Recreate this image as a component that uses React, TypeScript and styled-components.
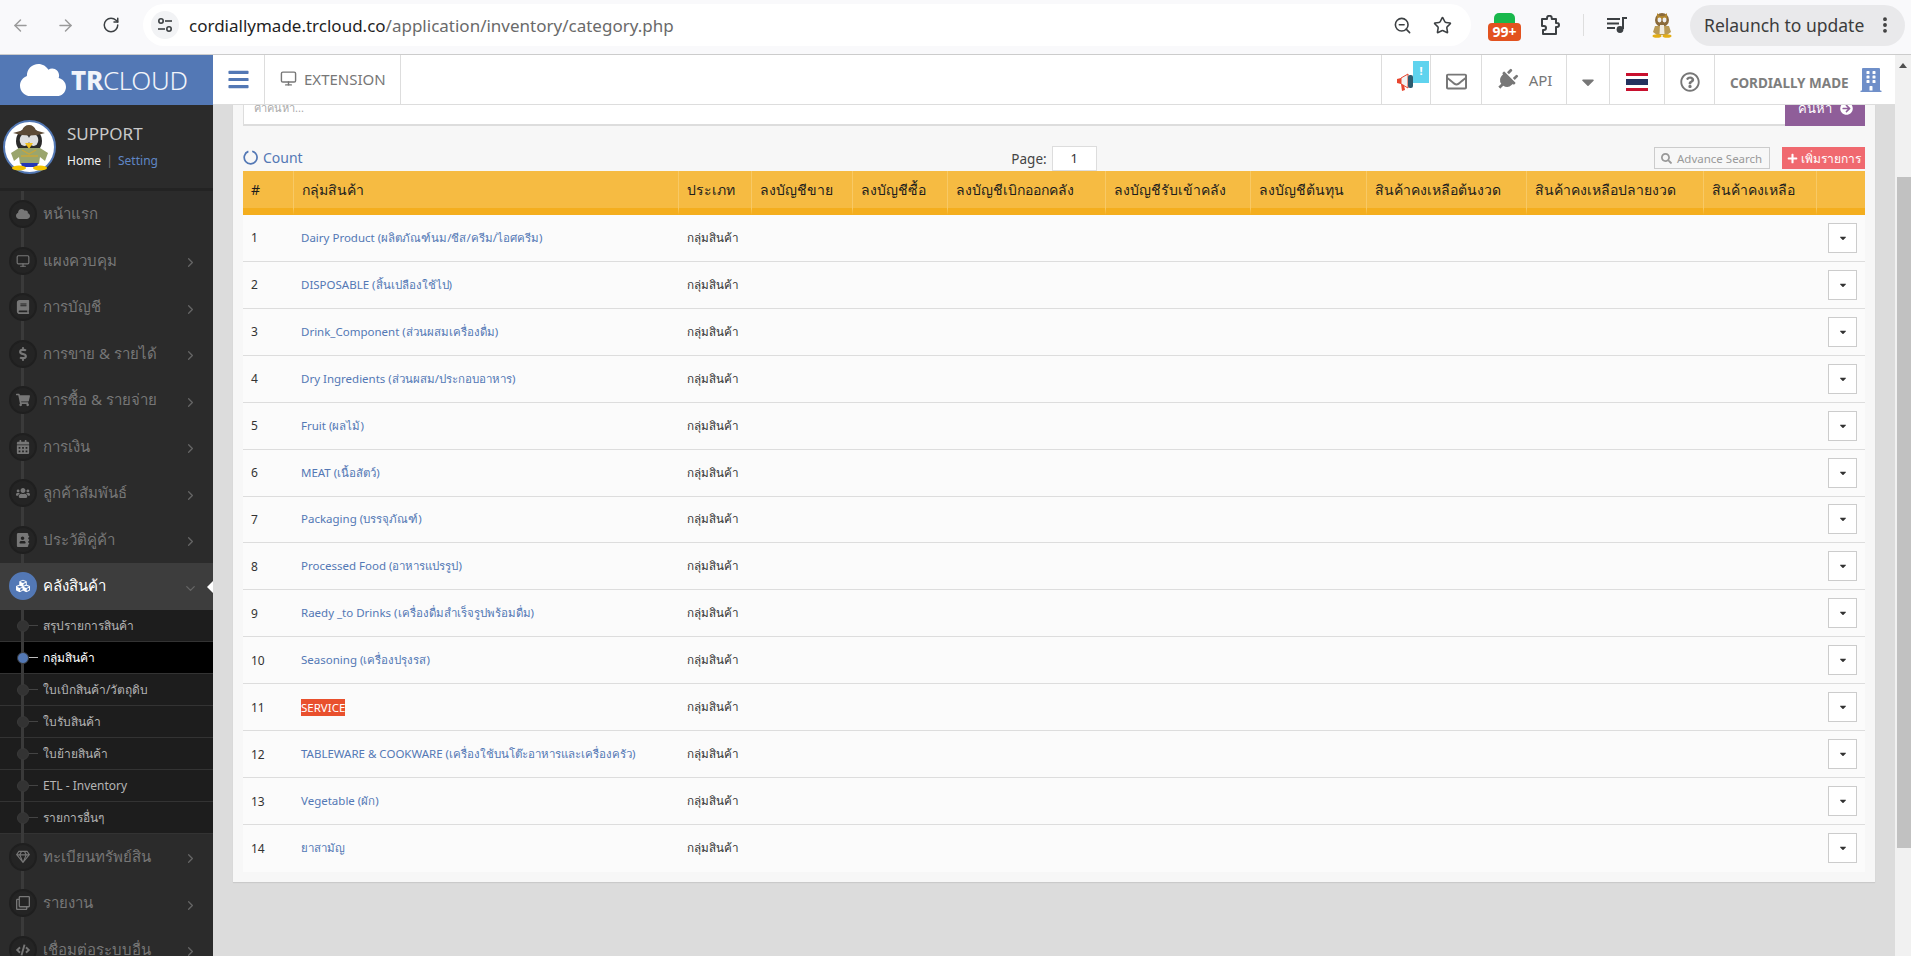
import * as React from 'react';
import styled, { createGlobalStyle } from 'styled-components';
import { ArrowLeft, ArrowRight, RotateCw, ZoomOut, Star, MoreVertical } from 'lucide-react';
import {
    FaCloud, FaBook, FaDollarSign, FaShoppingCart, FaCalendarAlt, FaUsers, FaAddressBook, FaCubes,
    FaRegGem, FaRegClone, FaCode, FaBars, FaRegEnvelope, FaPlug, FaCaretDown, FaRegQuestionCircle,
    FaBuilding, FaSearch, FaPlus, FaArrowCircleRight,
} from 'react-icons/fa';
import { FiMonitor, FiChevronRight, FiChevronDown } from 'react-icons/fi';

const FONT = `"Noto Sans", "Noto Sans CJK SC", sans-serif`;

const GlobalStyle = createGlobalStyle`
    html, body {
        margin: 0;
        padding: 0;
        height: 100%;
        overflow: hidden;
        font-family: ${FONT};
    }
    * { box-sizing: border-box; }
`;

const menuTop = [
    { label: 'หน้าแรก', icon: <FaCloud />, more: false },
    { label: 'แผงควบคุม', icon: <FiMonitor />, more: true },
    { label: 'การบัญชี', icon: <FaBook />, more: true },
    { label: 'การขาย & รายได้', icon: <FaDollarSign />, more: true },
    { label: 'การซื้อ & รายจ่าย', icon: <FaShoppingCart />, more: true },
    { label: 'การเงิน', icon: <FaCalendarAlt />, more: true },
    { label: 'ลูกค้าสัมพันธ์', icon: <FaUsers />, more: true },
    { label: 'ประวัติคู่ค้า', icon: <FaAddressBook />, more: true },
];

const subMenu = ['สรุปรายการสินค้า', 'กลุ่มสินค้า', 'ใบเบิกสินค้า/วัตถุดิบ', 'ใบรับสินค้า', 'ใบย้ายสินค้า', 'ETL - Inventory', 'รายการอื่นๆ'];

const menuBottom = [
    { label: 'ทะเบียนทรัพย์สิน', icon: <FaRegGem /> },
    { label: 'รายงาน', icon: <FaRegClone /> },
    { label: 'เชื่อมต่อระบบอื่น', icon: <FaCode /> },
];

const columns = [
    { label: '#', width: 50 },
    { label: 'กลุ่มสินค้า', width: 385 },
    { label: 'ประเภท', width: 73 },
    { label: 'ลงบัญชีขาย', width: 101 },
    { label: 'ลงบัญชีซื้อ', width: 95 },
    { label: 'ลงบัญชีเบิกออกคลัง', width: 158 },
    { label: 'ลงบัญชีรับเข้าคลัง', width: 145 },
    { label: 'ลงบัญชีต้นทุน', width: 116 },
    { label: 'สินค้าคงเหลือต้นงวด', width: 160 },
    { label: 'สินค้าคงเหลือปลายงวด', width: 177 },
    { label: 'สินค้าคงเหลือ', width: 113 },
    { label: '', width: 49 },
];

const categories = [
    'Dairy Product (ผลิตภัณฑ์นม/ชีส/ครีม/ไอศครีม)',
    'DISPOSABLE (สิ้นเปลืองใช้ไป)',
    'Drink_Component (ส่วนผสมเครื่องดื่ม)',
    'Dry Ingredients (ส่วนผสม/ประกอบอาหาร)',
    'Fruit (ผลไม้)',
    'MEAT (เนื้อสัตว์)',
    'Packaging (บรรจุภัณฑ์)',
    'Processed Food (อาหารแปรรูป)',
    'Raedy _to Drinks (เครื่องดื่มสำเร็จรูปพร้อมดื่ม)',
    'Seasoning (เครื่องปรุงรส)',
    'SERVICE',
    'TABLEWARE & COOKWARE (เครื่องใช้บนโต๊ะอาหารและเครื่องครัว)',
    'Vegetable (ผัก)',
    'ยาสามัญ',
];

const Penguin = () => (
    <svg width="53" height="54" viewBox="0 0 53 54">
        <ellipse cx="26.5" cy="27" rx="25.5" ry="26" fill="#fff" stroke="#5378b5" strokeWidth="2" />
        <ellipse cx="26" cy="21" rx="13" ry="13" fill="#2a2a2a" />
        <ellipse cx="21.5" cy="20" rx="4.8" ry="6" fill="#dedede" />
        <ellipse cx="30.5" cy="20" rx="4.8" ry="6" fill="#dedede" />
        <path d="M10 13 L19 10.5 Q21 5 26 5 Q31 5 33 10.5 L42 13 Q27 18 10 13Z" fill="#5c4a36" />
        <path d="M22 23 L30 23 L26 29Z" fill="#f0c020" />
        <path d="M8 33 L16 28 L37 28 L45 33 L42 41 L37 37 L36 44 L17 44 L16 37 L11 41Z" fill="#9aa56d" />
        <path d="M19 30 L26 34 L33 30 M18 36 L35 36" fill="none" stroke="#c9a63a" strokeWidth="1.3" />
        <path d="M18 43 L35 43 L34 47 L19 47Z" fill="#2438b8" />
        <ellipse cx="16" cy="48" rx="7" ry="2.6" fill="#f5c400" />
        <ellipse cx="37" cy="48" rx="7" ry="2.6" fill="#f5c400" />
    </svg>
);

const ProfileGlyph = () => (
    <svg width="22" height="26" viewBox="0 0 22 26">
        <ellipse cx="11" cy="8" rx="7" ry="7" fill="#8a6a3a" />
        <path d="M6 1 L9 4 L13 4 L16 1 L16 7 L6 7Z" fill="#b2862f" />
        <ellipse cx="8.5" cy="8" rx="2" ry="2.4" fill="#eee" />
        <ellipse cx="13.5" cy="8" rx="2" ry="2.4" fill="#eee" />
        <path d="M4 14 L18 14 L20 20 L16 23 L6 23 L2 20Z" fill="#b99a55" />
        <path d="M9 13 L13 13 L13.5 22 L8.5 22Z" fill="#efeadf" />
        <ellipse cx="6" cy="24" rx="4.5" ry="1.8" fill="#e3ae16" />
        <ellipse cx="16" cy="24" rx="4.5" ry="1.8" fill="#e3ae16" />
    </svg>
);

const TuneGlyph = () => (
    <svg width="16" height="16" viewBox="0 0 16 16" fill="none" stroke="#3c4043" strokeWidth="1.6">
        <circle cx="4" cy="4" r="2.2" />
        <path d="M8 4h7" />
        <circle cx="12" cy="12" r="2.2" />
        <path d="M1 12h7" />
    </svg>
);

const PuzzleGlyph = () => (
    <svg width="21" height="20" viewBox="0 0 21 20" fill="none" stroke="#3c4043" strokeWidth="2" strokeLinejoin="round">
        <path d="M2 4 H7 V3.2 a2.4 2.4 0 0 1 4.8 0 V4 H16 V8 h1 a2 2 0 0 1 0 4 h-1 V19 H3 V15 h1 a2 2 0 0 0 0 -4 H2 Z" />
    </svg>
);

const MediaGlyph = () => (
    <svg width="20" height="16" viewBox="0 0 20 16" fill="#3c4043">
        <rect x="0" y="1" width="13" height="2" />
        <rect x="0" y="5.5" width="12" height="2" />
        <rect x="0" y="10" width="8" height="2" />
        <rect x="15" y="0" width="2" height="12" />
        <rect x="15" y="0" width="5" height="2" />
        <circle cx="13" cy="12.5" r="3.4" />
    </svg>
);

const Megaphone = () => (
    <svg width="18" height="20" viewBox="0 0 18 20">
        <path d="M0 7 L4 6 L4 12 L0 11Z" fill="#e8462f" />
        <path d="M4 6 L11 2 L11 16 L4 12Z" fill="#f2f2f2" stroke="#e8462f" strokeWidth="1" />
        <path d="M4 12 L7 13 L8 18 L5 19Z" fill="#e8462f" />
        <rect x="11" y="3" width="5" height="13" rx="2" fill="#2d5a6e" />
    </svg>
);

const ThaiFlag = () => (
    <svg width="22" height="18" viewBox="0 0 22 18">
        <rect width="22" height="18" fill="#fff" />
        <rect width="22" height="3" fill="#c8102e" />
        <rect y="6" width="22" height="6" fill="#24315e" />
        <rect y="15" width="22" height="3" fill="#c8102e" />
    </svg>
);

const Spinner = () => (
    <svg width="15" height="15" viewBox="0 0 15 15" fill="none" stroke="#5378b5" strokeWidth="1.7">
        <path d="M9.2 1.2 A6.4 6.4 0 1 1 5.4 1.4" />
    </svg>
);

export default function App() {
    return (
        <Page>
            <GlobalStyle />
            <BrowserBar>
                <ChromeButton $dim><ArrowLeft size={19} strokeWidth={1.8} /></ChromeButton>
                <ChromeButton $dim><ArrowRight size={19} strokeWidth={1.8} /></ChromeButton>
                <ChromeButton><RotateCw size={18} strokeWidth={2} /></ChromeButton>
                <AddressPill>
                    <TuneCircle><TuneGlyph /></TuneCircle>
                    <Url>cordiallymade.trcloud.co<UrlPath>/application/inventory/category.php</UrlPath></Url>
                    <AddressIcon><ZoomOut size={19} strokeWidth={2} /></AddressIcon>
                    <AddressIcon><Star size={19} strokeWidth={2} /></AddressIcon>
                </AddressPill>
                <ExtensionIcon>
                    <GreenTop />
                    <RedBadge>99+</RedBadge>
                </ExtensionIcon>
                <ToolIcon $width={40}><PuzzleGlyph /></ToolIcon>
                <ToolDivider />
                <ToolIcon $width={46}><MediaGlyph /></ToolIcon>
                <ToolIcon $width={44}><ProfileGlyph /></ToolIcon>
                <RelaunchPill>
                    Relaunch to update
                    <MoreVertical size={20} strokeWidth={2.6} />
                </RelaunchPill>
            </BrowserBar>
            <Body>
                <Sidebar>
                    <LogoBlock>
                        <FaCloud size={46} color="#fff" />
                        <LogoText><b>TR</b>CLOUD</LogoText>
                    </LogoBlock>
                    <Profile>
                        <Penguin />
                        <ProfileInfo>
                            <ProfileName>SUPPORT</ProfileName>
                            <ProfileLinks>Home <Pipe>|</Pipe> <SettingLink>Setting</SettingLink></ProfileLinks>
                        </ProfileInfo>
                    </Profile>
                    <Nav>
                        {menuTop.map((m) => (
                            <MenuItem key={m.label}>
                                <IconCircle>{m.icon}</IconCircle>
                                <MenuLabel>{m.label}</MenuLabel>
                                {m.more && <Chevron><FiChevronRight /></Chevron>}
                            </MenuItem>
                        ))}
                        <MenuItem $active>
                            <IconCircle $active><FaCubes /></IconCircle>
                            <MenuLabel $active>คลังสินค้า</MenuLabel>
                            <Chevron><FiChevronDown /></Chevron>
                        </MenuItem>
                        <SubList>
                            {subMenu.map((s) => (
                                <SubItem key={s} $active={s === 'กลุ่มสินค้า'}>
                                    <SubDot $active={s === 'กลุ่มสินค้า'} />
                                    <SubTick $active={s === 'กลุ่มสินค้า'} />
                                    {s}
                                </SubItem>
                            ))}
                        </SubList>
                        {menuBottom.map((m) => (
                            <MenuItem key={m.label}>
                                <IconCircle>{m.icon}</IconCircle>
                                <MenuLabel>{m.label}</MenuLabel>
                                <Chevron><FiChevronRight /></Chevron>
                            </MenuItem>
                        ))}
                    </Nav>
                </Sidebar>
                <Main>
                    <TopBar>
                        <BarsCell><FaBars size={23} color="#5378b5" /></BarsCell>
                        <ExtensionCell><FiMonitor size={17} />EXTENSION</ExtensionCell>
                        <TopSpacer />
                        <TopCell $width={49}>
                            <Megaphone />
                            <NoticeBadge>!</NoticeBadge>
                        </TopCell>
                        <TopCell $width={51}><FaRegEnvelope size={21} /></TopCell>
                        <TopCell $width={85}><PlugIcon size={22} /><ApiText>API</ApiText></TopCell>
                        <TopCell $width={43}><FaCaretDown size={20} /></TopCell>
                        <TopCell $width={55}><ThaiFlag /></TopCell>
                        <TopCell $width={50}><FaRegQuestionCircle size={20} /></TopCell>
                        <CompanyCell>CORDIALLY MADE<BuildingIcon size={24} color="#6f8fc9" /></CompanyCell>
                    </TopBar>
                    <Content>
                        <Panel>
                            <SearchRow>
                                <SearchInput>คำค้นหา...</SearchInput>
                                <SearchButton>ค้นหา <FaArrowCircleRight size={13} /></SearchButton>
                            </SearchRow>
                            <ToolRow>
                                <CountLink><Spinner />Count</CountLink>
                                <PageBox>Page:<PageInput>1</PageInput></PageBox>
                                <ToolActions>
                                    <AdvanceButton><FaSearch size={11} />Advance Search</AdvanceButton>
                                    <AddButton><FaPlus size={11} />เพิ่มรายการ</AddButton>
                                </ToolActions>
                            </ToolRow>
                            <Table>
                                <colgroup>
                                    {columns.map((c, i) => <col key={i} width={c.width} />)}
                                </colgroup>
                                <thead>
                                    <tr>
                                        {columns.map((c, i) => <Th key={i}>{c.label}</Th>)}
                                    </tr>
                                </thead>
                                <tbody>
                                    {categories.map((name, i) => (
                                        <Row key={name}>
                                            <NumCell>{i + 1}</NumCell>
                                            <NameCell>
                                                {name === 'SERVICE' ? <Highlight>{name}</Highlight> : name}
                                            </NameCell>
                                            <TypeCell>กลุ่มสินค้า</TypeCell>
                                            <td colSpan={8} />
                                            <ActionCell><RowButton><FaCaretDown size={10} /></RowButton></ActionCell>
                                        </Row>
                                    ))}
                                </tbody>
                            </Table>
                        </Panel>
                    </Content>
                </Main>
                <ScrollTrack>
                    <ScrollArrow />
                    <ScrollThumb />
                </ScrollTrack>
            </Body>
        </Page>
    );
}

const Page = styled.div`
    display: flex;
    flex-direction: column;
    height: 100vh;
    overflow: hidden;
`;

const BrowserBar = styled.div`
    display: flex;
    align-items: center;
    height: 55px;
    padding: 0 6px 4px 0;
    flex-shrink: 0;
    background: #f9f9fb;
    border-bottom: 1px solid #ccc;
`;

const ChromeButton = styled.div<{ $dim?: boolean }>`
    display: flex;
    justify-content: center;
    width: 45px;
    color: ${(p) => (p.$dim ? '#9a9a9a' : '#3c4043')};
    &:first-child { margin-left: -2px; }
`;

const AddressPill = styled.div`
    display: flex;
    align-items: center;
    width: 1328px;
    height: 42px;
    margin-left: 10px;
    padding: 0 9px 0 8px;
    border-radius: 21px;
    background: #fff;
`;

const TuneCircle = styled.div`
    display: flex;
    align-items: center;
    justify-content: center;
    width: 28px;
    height: 28px;
    border-radius: 50%;
    background: #f2f3f5;
`;

const Url = styled.div`
    flex: 1;
    margin-left: 10px;
    font-size: 17px;
    color: #1f1f1f;
`;

const UrlPath = styled.span`
    color: #6a6a6a;
`;

const AddressIcon = styled.div`
    display: flex;
    justify-content: center;
    width: 40px;
    color: #3c4043;
`;

const ExtensionIcon = styled.div`
    position: relative;
    width: 33px;
    height: 28px;
    margin: 4px 9px 0 17px;
`;

const GreenTop = styled.div`
    width: 21px;
    height: 12px;
    margin: 0 auto;
    border-radius: 5px 5px 0 0;
    background: #19b84c;
`;

const RedBadge = styled.div`
    position: absolute;
    left: 0;
    top: 10px;
    width: 33px;
    height: 18px;
    border-radius: 4px;
    background: #e2521f;
    color: #fff;
    font-size: 14px;
    font-weight: 700;
    line-height: 18px;
    text-align: center;
`;

const ToolIcon = styled.div<{ $width: number }>`
    display: flex;
    justify-content: center;
    width: ${(p) => p.$width}px;
`;

const ToolDivider = styled.div`
    width: 1px;
    height: 22px;
    margin: 0 10px 0 13px;
    background: #dedede;
`;

const RelaunchPill = styled.div`
    display: flex;
    align-items: center;
    justify-content: space-between;
    width: 215px;
    height: 41px;
    margin-left: 6px;
    padding: 0 10px 0 14px;
    border-radius: 21px;
    background: #e9e9eb;
    color: #3c3c3c;
    font-size: 17.5px;
    white-space: nowrap;
`;

const Body = styled.div`
    display: flex;
    flex: 1;
    min-height: 0;
`;

const Sidebar = styled.div`
    display: flex;
    flex-direction: column;
    width: 213px;
    flex-shrink: 0;
    overflow: hidden;
    background: #2b2b2b;
`;

const LogoBlock = styled.div`
    display: flex;
    align-items: center;
    gap: 5px;
    height: 50px;
    flex-shrink: 0;
    padding-left: 20px;
    background: #5378b5;
`;

const LogoText = styled.div`
    color: #f1f4fa;
    font-size: 26px;
    font-weight: 300;
    letter-spacing: -0.3px;
    b { font-weight: 800; }
`;

const Profile = styled.div`
    display: flex;
    align-items: flex-start;
    gap: 11px;
    height: 86px;
    flex-shrink: 0;
    padding: 15px 0 0 3px;
    border-bottom: 3px solid #232323;
`;

const ProfileInfo = styled.div`
    padding-top: 2px;
`;

const ProfileName = styled.div`
    color: #c9c9c9;
    font-size: 17px;
    line-height: 24px;
`;

const ProfileLinks = styled.div`
    margin-top: 6px;
    color: #f0f0f0;
    font-size: 12px;
`;

const Pipe = styled.span`
    color: #777;
    margin: 0 2px;
`;

const SettingLink = styled.span`
    color: #5f86c5;
`;

const Nav = styled.div`
    position: relative;
    &::before {
        content: '';
        position: absolute;
        top: 0;
        bottom: 0;
        left: 21px;
        width: 3px;
        background: #3a3a3a;
    }
`;

const MenuItem = styled.div<{ $active?: boolean }>`
    position: relative;
    display: flex;
    align-items: center;
    height: 46.5px;
    padding: 0 15px 0 9px;
    background: ${(p) => (p.$active ? '#3d3d3d' : 'transparent')};
    ${(p) => p.$active && `
        &::after {
            content: '';
            position: absolute;
            right: 0;
            top: 18px;
            border: 6px solid transparent;
            border-right-color: #fff;
            border-left-width: 0;
        }
    `}
`;

const IconCircle = styled.div<{ $active?: boolean }>`
    position: relative;
    display: flex;
    align-items: center;
    justify-content: center;
    width: 28px;
    height: 28px;
    flex-shrink: 0;
    border-radius: 50%;
    background: ${(p) => (p.$active ? '#5378b5' : '#242424')};
    border: 2px solid ${(p) => (p.$active ? '#5378b5' : '#1f1f1f')};
    color: ${(p) => (p.$active ? '#fff' : '#777')};
    font-size: 14px;
`;

const MenuLabel = styled.div<{ $active?: boolean }>`
    flex: 1;
    margin-left: 6px;
    color: ${(p) => (p.$active ? '#fff' : '#777')};
    font-size: 15px;
    white-space: nowrap;
`;

const Chevron = styled.div`
    display: flex;
    color: #666;
    font-size: 15px;
    margin-top: 4px;
`;

const SubList = styled.div`
    position: relative;
    background: #1d1d1d;
    &::before {
        content: '';
        position: absolute;
        z-index: 1;
        top: 0;
        bottom: 0;
        left: 21px;
        width: 3px;
        background: #3a3a3a;
    }
`;

const SubItem = styled.div<{ $active?: boolean }>`
    display: flex;
    align-items: center;
    height: 32px;
    border-bottom: 1px solid #333;
    background: ${(p) => (p.$active ? '#000' : 'transparent')};
    color: ${(p) => (p.$active ? '#fff' : '#b4b4b4')};
    font-size: 12px;
    white-space: nowrap;
`;

const SubDot = styled.span<{ $active?: boolean }>`
    position: relative;
    z-index: 2;
    width: 12px;
    height: 12px;
    margin: 2px 0 0 17px;
    border-radius: 50%;
    background: ${(p) => (p.$active ? '#5378b5' : '#333')};
    border: 1px solid #3a3a3a;
`;

const SubTick = styled.span<{ $active?: boolean }>`
    width: 9px;
    height: 1px;
    margin: 0 5px 0 0;
    background: ${(p) => (p.$active ? '#bbb' : '#444')};
`;

const Main = styled.div`
    display: flex;
    flex-direction: column;
    flex: 1;
    min-width: 0;
`;

const TopBar = styled.div`
    position: relative;
    z-index: 2;
    display: flex;
    height: 50px;
    flex-shrink: 0;
    background: #fff;
    border-bottom: 1px solid #ddd;
    color: #777;
`;

const BarsCell = styled.div`
    display: flex;
    align-items: center;
    justify-content: center;
    width: 51px;
`;

const ExtensionCell = styled.div`
    display: flex;
    align-items: center;
    gap: 7px;
    width: 137px;
    padding: 0 0 2px 15px;
    border-left: 1px solid #ddd;
    border-right: 1px solid #ddd;
    font-size: 15px;
`;

const TopSpacer = styled.div`
    flex: 1;
`;

const TopCell = styled.div<{ $width: number }>`
    position: relative;
    display: flex;
    align-items: center;
    justify-content: center;
    gap: 11px;
    width: ${(p) => p.$width}px;
    border-left: 1px solid #ddd;
    padding-top: 4px;
    color: #777;
`;

const PlugIcon = styled(FaPlug)`
    margin-top: -3px;
    transform: rotate(45deg);
`;

const NoticeBadge = styled.span`
    position: absolute;
    top: 6px;
    right: 1px;
    width: 16px;
    height: 22px;
    background: #5fd3ee;
    color: #fff;
    font-size: 11px;
    font-weight: 700;
    line-height: 20px;
    text-align: center;
`;

const ApiText = styled.span`
    margin-top: -3px;
    font-size: 15px;
`;

const CompanyCell = styled.div`
    display: flex;
    align-items: center;
    gap: 10px;
    width: 181px;
    padding: 6px 0 0 15px;
    border-left: 1px solid #ddd;
    color: #7e7e7e;
    font-size: 13.5px;
    font-weight: 700;
    white-space: nowrap;
`;

const BuildingIcon = styled(FaBuilding)`
    margin-top: -6px;
`;

const Content = styled.div`
    flex: 1;
    min-height: 0;
    overflow: hidden;
    padding: 0 20px;
    background: #dcdcdc;
`;

const Panel = styled.div`
    padding: 0 10px 10px;
    background: #f7f7f7;
    box-shadow: 0 1px 1px rgba(0, 0, 0, 0.08);
`;

const SearchRow = styled.div`
    display: flex;
    height: 40px;
    margin-top: -19px;
    border-left: 1px solid #ddd;
    border-bottom: 2px solid #ddd;
    background: #fff;
`;

const SearchInput = styled.div`
    flex: 1;
    padding: 13px 0 0 10px;
    color: #aaa;
    font-size: 11px;
`;

const SearchButton = styled.div`
    display: flex;
    align-items: center;
    gap: 8px;
    width: 80px;
    margin-bottom: -2px;
    padding: 5px 0 0 13px;
    background: #8f5e99;
    color: #fff;
    font-size: 13px;
    font-weight: 500;
`;

const ToolRow = styled.div`
    display: grid;
    grid-template-columns: 1fr auto 1fr;
    align-items: center;
    height: 25px;
    margin-top: 20px;
`;

const CountLink = styled.div`
    display: flex;
    align-items: center;
    gap: 5px;
    margin-top: -2px;
    color: #5378b5;
    font-size: 14px;
`;

const PageBox = styled.div`
    display: flex;
    align-items: center;
    gap: 5px;
    color: #444;
    font-size: 13.5px;
`;

const PageInput = styled.div`
    width: 45px;
    height: 25px;
    border: 1px solid #ddd;
    background: #fff;
    color: #333;
    font-size: 13px;
    line-height: 23px;
    text-align: center;
`;

const ToolActions = styled.div`
    display: flex;
    justify-content: flex-end;
    align-items: flex-start;
    gap: 12px;
    height: 25px;
    padding-top: 1px;
`;

const AdvanceButton = styled.div`
    display: flex;
    align-items: center;
    gap: 5px;
    width: 116px;
    height: 22px;
    padding-left: 6px;
    border: 1px solid #ccc;
    color: #999;
    font-size: 11.5px;
    white-space: nowrap;
`;

const AddButton = styled.div`
    display: flex;
    align-items: center;
    gap: 3px;
    width: 83px;
    height: 22px;
    padding-left: 5px;
    background: #f0696f;
    color: #fff;
    font-size: 12px;
    white-space: nowrap;
`;

const Table = styled.table`
    width: 100%;
    border-collapse: separate;
    border-spacing: 0;
    table-layout: fixed;
`;

const Th = styled.th`
    height: 44px;
    padding: 0 8px;
    border-left: 1px solid #f8c965;
    border-bottom: 7px solid #f4ae1e;
    background: #f6bb42;
    color: #1d1d1d;
    font-size: 14px;
    line-height: 20px;
    font-weight: 400;
    text-align: left;
    white-space: nowrap;
    &:first-child { border-left: none; }
`;

const Row = styled.tr`
    height: 46.93px;
    background: #fbfbfb;
    td { border-bottom: 1px solid #ddd; }
    &:last-child td { border-bottom: none; }
`;

const NumCell = styled.td`
    padding-left: 8px;
    color: #333;
    font-size: 12px;
`;

const NameCell = styled.td`
    padding-left: 8px;
    color: #5378b5;
    font-size: 11.5px;
    white-space: nowrap;
`;

const TypeCell = styled.td`
    padding-left: 9px;
    color: #333;
    font-size: 11.7px;
    white-space: nowrap;
`;

const Highlight = styled.span`
    display: inline-block;
    padding: 1px 0;
    background: #e9502d;
    color: #fff;
`;

const ActionCell = styled.td`
    padding-left: 12px;
`;

const RowButton = styled.div`
    display: flex;
    align-items: center;
    justify-content: center;
    width: 29px;
    height: 30px;
    border: 1px solid #ccc;
    background: #fff;
    color: #333;
`;

const ScrollTrack = styled.div`
    width: 16px;
    flex-shrink: 0;
    background: #f1f1f1;
`;

const ScrollArrow = styled.div`
    width: 0;
    height: 0;
    margin: 8px 0 0 4px;
    border: 4px solid transparent;
    border-top-width: 0;
    border-bottom: 5px solid #505050;
`;

const ScrollThumb = styled.div`
    width: 14px;
    height: 671px;
    margin: 109px 0 0 2px;
    background: #c1c1c1;
`;
